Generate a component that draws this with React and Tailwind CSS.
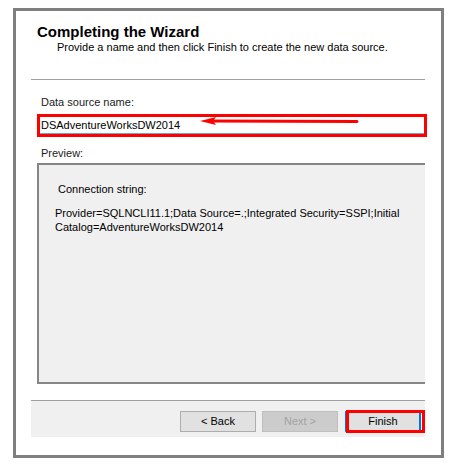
export default function App() {
  return (
    <div className="w-[462px] h-[473px] bg-white pt-[8px] pl-[13px] font-['Liberation_Sans',Arial,sans-serif] text-black">
      <div className="w-[431px] h-[450px] border-[3px] border-[#7f7f7f] flex flex-col">
        <div className="pt-[13px] pl-[21px] text-[15px] leading-[16px] font-bold">Completing the Wizard</div>
        <div className="pl-[41px] text-[11px] leading-[14px]">
          Provide a name and then click Finish to create the new data source.
        </div>

        <div className="mt-[25px] ml-[15px] w-[394px] h-px bg-[#a0a0a0]" />

        <div className="mt-[15px] pl-[25px] text-[11px] leading-[14px] text-[#1a1a1a]">Data source name:</div>

        {/* name field, marked with a red box and arrow */}
        <div className="relative mt-[5px] ml-[21px] w-[390px] h-[23px] border-[3px] border-[#ff0000]">
          <div className="h-full border-b border-[#6aa6dc] pl-[1px] pt-[1px] text-[11px] leading-[14px]">
            DSAdventureWorksDW2014
          </div>
          <svg className="absolute left-[157px] top-[-3px]" width="170" height="16" viewBox="0 0 170 16">
            <line x1="14" y1="7" x2="160" y2="7.5" stroke="#ff0000" strokeWidth="3" strokeLinecap="round" />
            <polygon points="3,7 19,3 16,7 19,11" fill="#ff0000" />
          </svg>
        </div>

        <div className="mt-[9px] pl-[25px] text-[11px] leading-[14px] text-[#1a1a1a]">Preview:</div>

        <div className="mt-[3px] ml-[21px] w-[388px] h-[221px] border-t-2 border-l-2 border-b-2 border-[#858585] bg-[#f0f0f0]">
          <div className="pt-[17px] pl-[19px] text-[11px] leading-[14px]">Connection string:</div>
          <div className="mt-[10px] pl-[16px] text-[11px] leading-[14px] whitespace-nowrap">
            Provider=SQLNCLI11.1;Data Source=.;Integrated Security=SSPI;Initial
            <br />
            Catalog=AdventureWorksDW2014
          </div>
        </div>

        <div className="mt-[16px] ml-[15px] w-[394px] h-px bg-[#a0a0a0]" />
        <div className="ml-[15px] w-[394px] h-[36px] bg-[#f0f0f0] flex justify-end items-start pt-[10px] pr-[4px] text-[11px]">
          <button className="w-[76px] h-[21px] bg-[#e1e1e1] border border-[#adadad] leading-[19px] text-black">
            &lt; Back
          </button>
          <button className="ml-[6px] w-[76px] h-[21px] bg-[#cccccc] border border-[#bfbfbf] leading-[19px] text-[#a3a3a3]">
            Next &gt;
          </button>
          <div className="relative ml-[7px]">
            <button className="w-[76px] h-[21px] bg-[#e1e1e1] border-x-2 border-y border-x-[#0078d7] border-y-[#adadad] leading-[19px] text-black">
              Finish
            </button>
            <div className="absolute left-[1px] top-[-1px] w-[79px] h-[23px] border-[3px] border-[#ff0000]" />
          </div>
        </div>
      </div>
    </div>
  );
}
